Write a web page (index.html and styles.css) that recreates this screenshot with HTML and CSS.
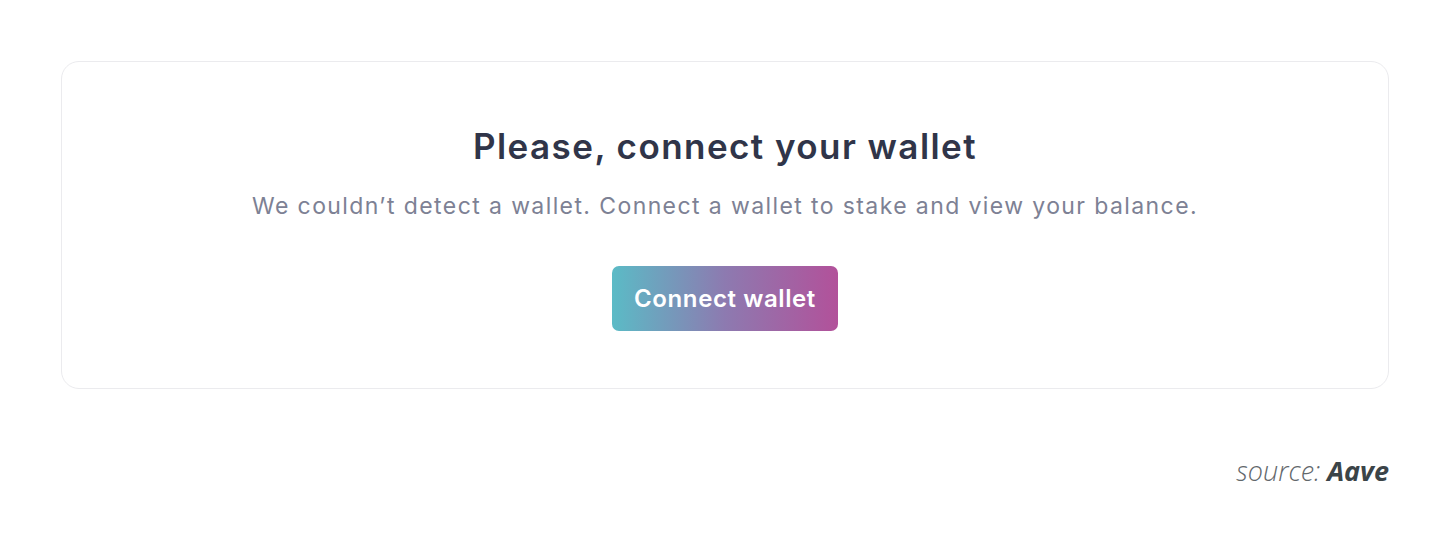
FILE: index.html
```html
<!DOCTYPE html>
<html lang="en">
<head>
<meta charset="utf-8">
<title>Connect wallet</title>
<link rel="stylesheet" href="styles.css">
</head>
<body>
<main class="page">
  <section class="card">
    <h1 class="title">Please, connect your wallet</h1>
    <p class="subtitle">We couldn’t detect a wallet. Connect a wallet to stake and view your balance.</p>
    <button class="connect-btn" type="button">Connect wallet</button>
  </section>
  <p class="source">source: <strong>Aave</strong></p>
</main>
</body>
</html>
```

FILE: styles.css
```css
html, body {
  margin: 0;
  padding: 0;
  background: #ffffff;
}
.page {
  width: 1450px;
  height: 550px;
  box-sizing: border-box;
  padding: 61px 61px 0 61px;
  display: flex;
  flex-direction: column;
}
.card {
  height: 328px;
  box-sizing: border-box;
  border: 1.5px solid #ebebee;
  border-radius: 18px;
  display: flex;
  flex-direction: column;
  align-items: center;
  padding-top: 62px;
  font-family: Inter, "Liberation Sans", sans-serif;
}
.title {
  margin: 0;
  font-size: 35px;
  font-weight: 600;
  color: #303549;
  line-height: 44px;
  letter-spacing: 1.45px;
}
.subtitle {
  margin: 22px 0 0 0;
  font-size: 23px;
  font-weight: 400;
  color: #7d8194;
  line-height: 32px;
  letter-spacing: 1.4px;
}
.connect-btn {
  margin-top: 44px;
  width: 226px;
  height: 65px;
  border: none;
  border-radius: 7px;
  background: linear-gradient(90deg, #5bbbc6 0%, #8d7ab0 50%, #b2519a 100%);
  color: #ffffff;
  font-family: Inter, "Liberation Sans", sans-serif;
  font-size: 24px;
  font-weight: 600;
  letter-spacing: 0.6px;
  padding: 0;
}
.source {
  margin: 64px 0 0 0;
  text-align: right;
  font-family: "Open Sans", "Liberation Sans", sans-serif;
  font-style: italic;
  font-weight: 300;
  font-size: 27px;
  color: #62676b;
  line-height: 36px;
}
.source strong {
  font-weight: 700;
  color: #3b4448;
}
```
